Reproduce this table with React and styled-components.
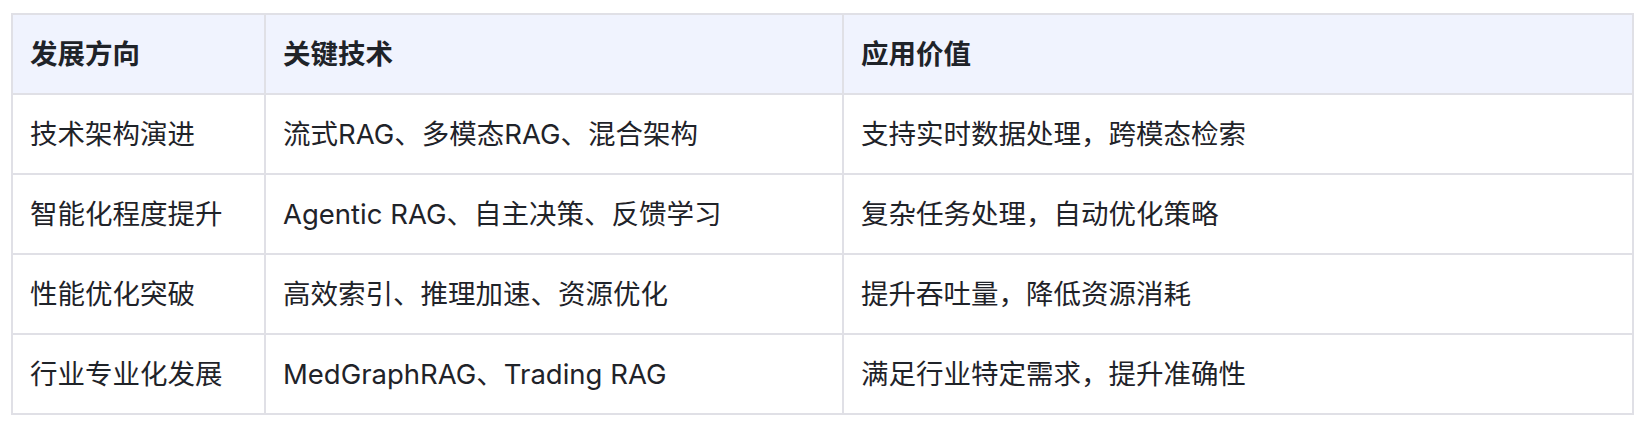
import styled, { createGlobalStyle } from "styled-components";

const GlobalStyle = createGlobalStyle`
  body {
    margin: 0;
    padding: 0;
    background: #ffffff;
    font-family: Inter, "Noto Sans CJK SC", sans-serif;
  }
`;

const Page = styled.div`
  padding: 13px 12px 17px 11px;
`;

const Table = styled.table`
  width: 1623px;
  table-layout: fixed;
  border-spacing: 0;
  border-top: 2px solid #e0e0e6;
  border-left: 2px solid #e0e0e6;
  color: #1f2329;
  font-size: 27.5px;
  line-height: 40px;
`;

const HeadCell = styled.th`
  background: #f0f3fe;
  font-weight: 600;
  text-align: left;
  padding: 19px 18px 19px 17px;
  border-right: 2px solid #e0e0e6;
  border-bottom: 2px solid #e0e0e6;
`;

const Cell = styled.td`
  font-weight: 400;
  padding: 19px 18px 19px 17px;
  border-right: 2px solid #e0e0e6;
  border-bottom: 2px solid #e0e0e6;
  white-space: nowrap;
`;

const columns = [
  { title: "发展方向", width: 253 },
  { title: "关键技术", width: 578 },
  { title: "应用价值", width: 790 },
];

const rows = [
  ["技术架构演进", "流式RAG、多模态RAG、混合架构", "支持实时数据处理，跨模态检索"],
  ["智能化程度提升", "Agentic RAG、自主决策、反馈学习", "复杂任务处理，自动优化策略"],
  ["性能优化突破", "高效索引、推理加速、资源优化", "提升吞吐量，降低资源消耗"],
  ["行业专业化发展", "MedGraphRAG、Trading RAG", "满足行业特定需求，提升准确性"],
];

export default function App() {
  return (
    <>
      <GlobalStyle />
      <Page>
        <Table>
          <colgroup>
            {columns.map((c) => (
              <col key={c.title} style={{ width: c.width }} />
            ))}
          </colgroup>
          <thead>
            <tr>
              {columns.map((c) => (
                <HeadCell key={c.title}>{c.title}</HeadCell>
              ))}
            </tr>
          </thead>
          <tbody>
            {rows.map((r) => (
              <tr key={r[0]}>
                {r.map((v, i) => (
                  <Cell key={i}>{v}</Cell>
                ))}
              </tr>
            ))}
          </tbody>
        </Table>
      </Page>
    </>
  );
}
